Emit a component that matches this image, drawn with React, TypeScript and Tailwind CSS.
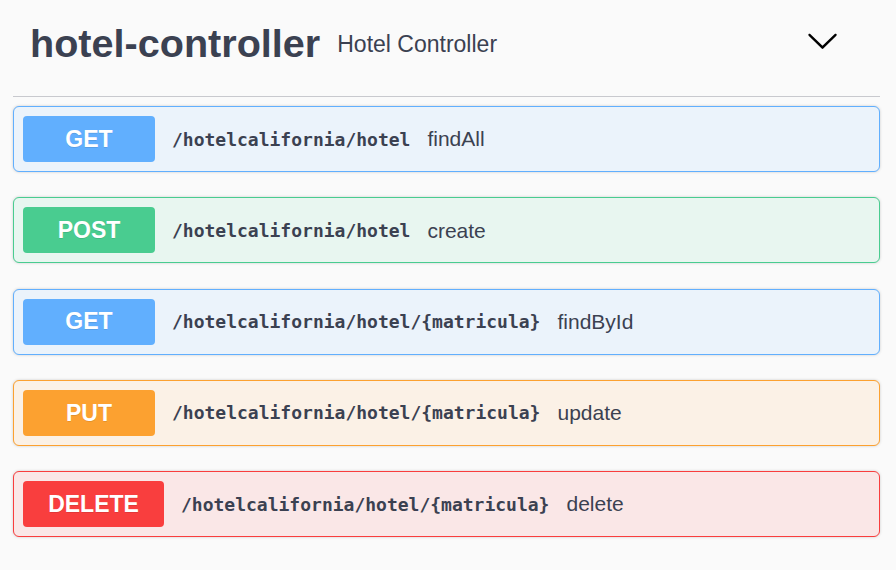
import { ReactNode } from "react"

type Method = "GET" | "POST" | "PUT" | "DELETE"

interface Operation {
    method: Method
    path: ReactNode
    summary: string
}

const methodStyles: Record<Method, { card: string; badge: string }> = {
    GET: { card: "border-[#61affe] bg-[#ebf3fb]", badge: "bg-[#61affe] w-[132px]" },
    POST: { card: "border-[#49cc90] bg-[#e8f6f0]", badge: "bg-[#49cc90] w-[132px]" },
    PUT: { card: "border-[#fca130] bg-[#fbf1e6]", badge: "bg-[#fca130] w-[132px]" },
    DELETE: { card: "border-[#f93e3e] bg-[#fae7e7]", badge: "bg-[#f93e3e] w-[141px]" },
}

const operations: Operation[] = [
    { method: "GET", path: "/hotelcalifornia/hotel", summary: "findAll" },
    { method: "POST", path: "/hotelcalifornia/hotel", summary: "create" },
    { method: "GET", path: "/hotelcalifornia/hotel/{matricula}", summary: "findById" },
    { method: "PUT", path: "/hotelcalifornia/hotel/{matricula}", summary: "update" },
    { method: "DELETE", path: "/hotelcalifornia/hotel/{matricula}", summary: "delete" },
]

const OperationRow = ({ method, path, summary }: Operation) => {
    const s = methodStyles[method]
    return (
        <div
            className={`flex h-[66px] items-center rounded-[6px] border px-[9px] shadow-[0_0_3px_rgba(0,0,0,0.19)] ${s.card}`}
        >
            <span
                className={`flex h-[46px] items-center justify-center rounded-[4px] text-[23px] font-bold text-white ${s.badge}`}
                style={{ textShadow: "0 1px 0 rgba(0,0,0,0.1)" }}
            >
                {method}
            </span>
            <span className="pl-[17px] pr-[17px] font-['DejaVu_Sans_Mono',monospace] text-[18px] font-semibold text-[#3b4151]">
                {path}
            </span>
            <span className="text-[21px] text-[#3b4151]">{summary}</span>
        </div>
    )
}

export default function App() {
    return (
        <div className="h-[570px] w-[896px] overflow-hidden bg-[#fafafa] pl-[13px] pr-[16px] font-['Liberation_Sans',Arial,sans-serif]">
            <div className="flex h-[97px] items-center border-b-[1.5px] border-[#c8c9ce] pb-[8px] pl-[17px]">
                <h4 className="text-[39.6px] leading-none font-bold text-[#3b4151]">hotel-controller</h4>
                <small className="pl-[17px] text-[23px] text-[#3b4151]">Hotel Controller</small>
                <button className="mr-[41px] ml-auto">
                    <svg width="33" height="33" viewBox="0 0 20 20" className="mt-[-8px]">
                        <path
                            fill="#000"
                            d="M17.418 6.109c.272-.268.709-.268.979 0s.271.701 0 .969l-7.908 7.83c-.27.268-.707.268-.979 0l-7.908-7.83c-.27-.268-.27-.701 0-.969.271-.268.709-.268.979 0L10 13.25l7.418-7.141z"
                        />
                    </svg>
                </button>
            </div>

            <div className="mt-[9px] flex flex-col gap-[25.25px]">
                {operations.map((op, i) => (
                    <OperationRow key={i} {...op} />
                ))}
            </div>
        </div>
    )
}
